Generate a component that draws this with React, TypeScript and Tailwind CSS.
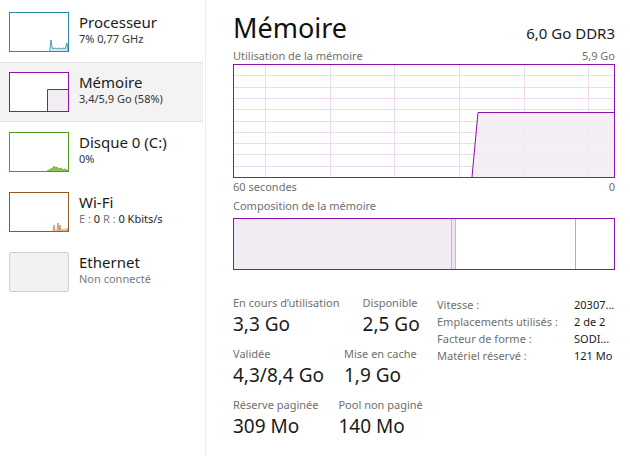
import React from 'react';

const font = { fontFamily: '"Segoe UI", "Noto Sans", "Open Sans", sans-serif' };

interface DeviceProps {
  title: string;
  subtitle: React.ReactNode;
  selected?: boolean;
  thumb: React.ReactNode;
  muted?: boolean;
}

const Device: React.FC<DeviceProps> = ({ title, subtitle, selected, thumb, muted }) => (
  <div
    className={`h-[60px] flex items-start pt-[9px] pl-[9px] border-y ${
      selected ? 'bg-[#f3f3f3] border-[#e2e2e2]' : 'border-transparent'
    }`}
  >
    {thumb}
    <div className="ml-[10px] flex flex-col">
      <span className="text-[15px] leading-[20px] text-[#1b1b1b]">{title}</span>
      <span className={`text-[11px] leading-[14px] ${muted ? 'text-[#7a7a7a]' : 'text-[#333]'}`}>{subtitle}</span>
    </div>
  </div>
);

const Thumb: React.FC<{ color: string; children?: React.ReactNode; bg?: string }> = ({ color, children, bg }) => (
  <svg width="60" height="40" viewBox="0 0 60 40" className="shrink-0">
    <rect x="0.5" y="0.5" width="59" height="39" fill={bg ?? '#fff'} stroke={color} />
    {children}
  </svg>
);

const Stat: React.FC<{ label: string; value: string }> = ({ label, value }) => (
  <div className="flex flex-col">
    <span className="text-[11px] leading-[14px] text-[#6f6f6f] whitespace-nowrap">{label}</span>
    <span className="text-[19px] leading-[28px] text-[#1b1b1b] whitespace-nowrap">{value}</span>
  </div>
);

const App: React.FC = () => {
  const vLines = [32, 97, 161, 226, 291, 355];
  const hLines = Array.from({ length: 9 }, (_, i) => 11.3 * (i + 1));

  return (
    <div className="w-[630px] h-[456px] bg-white flex overflow-hidden" style={font}>
      {/* Sidebar */}
      <div className="w-[206px] shrink-0 pt-[2px] pr-[2px] border-r border-[#ececec]">
        <Device
          title="Processeur"
          subtitle="7% 0,77 GHz"
          thumb={
            <Thumb color="#2a8aa0">
              <polyline
                points="41,39 41,36 42,28 43,35 44,37 46,36 48,37 50,36 52,37 54,36 56,37 57,34 58,31 59,39"
                fill="#d8ebef"
                stroke="#2a8aa0"
                strokeWidth="0.8"
              />
            </Thumb>
          }
        />
        <Device
          title="Mémoire"
          subtitle="3,4/5,9 Go (58%)"
          selected
          thumb={
            <Thumb color="#8b12ae">
              <path d="M38.5 39.5 V17.5 H59.5" fill="none" stroke="#8b12ae" />
              <rect x="39" y="18" width="20" height="21" fill="#f1edf2" />
            </Thumb>
          }
        />
        <Device
          title="Disque 0 (C:)"
          subtitle="0%"
          thumb={
            <Thumb color="#4e9a1c">
              <polyline
                points="38,39 40,38 42,37 44,36 45,34 46,36 48,35 50,37 52,36 54,38 56,37 58,38 59,39"
                fill="#8cc75a"
                stroke="#5aa628"
                strokeWidth="0.8"
              />
            </Thumb>
          }
        />
        <Device
          title="Wi-Fi"
          subtitle={
            <>
              <span className="text-[#7a7a7a]">E : </span>
              <span className="text-[#1b1b1b]">0 </span>
              <span className="text-[#7a7a7a]">R : </span>
              <span className="text-[#1b1b1b]">0 Kbits/s</span>
            </>
          }
          thumb={
            <Thumb color="#8a5a22">
              <polyline
                points="44,39 45,33 46,39 48,39 49,31 50,39 51,33 52,39 58,39 59,36"
                fill="#e9c9a8"
                stroke="#c8865a"
                strokeWidth="0.8"
              />
            </Thumb>
          }
        />
        <Device
          title="Ethernet"
          subtitle="Non connecté"
          muted
          thumb={
            <svg width="60" height="40" viewBox="0 0 60 40" className="shrink-0">
              <rect x="0.5" y="0.5" width="59" height="39" rx="1.5" fill="#f2f2f2" stroke="#cfcfcf" />
            </svg>
          }
        />
      </div>

      {/* Main */}
      <div className="flex-1 pl-[27px] pr-[17px] flex flex-col">
        <div className="flex items-end justify-between mt-[11px] h-[34px]">
          <span className="text-[27px] leading-[34px] text-[#111]">Mémoire</span>
          <span className="text-[15px] leading-[20px] text-[#1b1b1b] mb-[2px]">6,0 Go DDR3</span>
        </div>
        <div className="flex justify-between text-[11px] leading-[14px] text-[#6f6f6f] mt-[4px]">
          <span>Utilisation de la mémoire</span>
          <span>5,9 Go</span>
        </div>
        <svg width="382" height="114" viewBox="0 0 382 114" className="mt-[1px] block">
          <rect x="0.5" y="0.5" width="381" height="113" fill="#fff" />
          {vLines.map((x) => (
            <line key={x} x1={x + 0.5} y1="0" x2={x + 0.5} y2="114" stroke="#eadcee" />
          ))}
          {hLines.map((y) => (
            <line key={y} x1="0" y1={Math.round(y) + 0.5} x2="382" y2={Math.round(y) + 0.5} stroke="#eadcee" />
          ))}
          <polygon points="239,113 245,48.5 381,48.5 381,113" fill="#f1ecf3" fillOpacity="0.85" />
          <polyline points="239,113 245,48.5 381.5,48.5" fill="none" stroke="#8b12ae" />
          <rect x="0.5" y="0.5" width="381" height="113" fill="none" stroke="#8b12ae" />
        </svg>
        <div className="flex justify-between text-[11px] leading-[14px] text-[#6f6f6f] mt-[2px]">
          <span>60 secondes</span>
          <span>0</span>
        </div>
        <div className="text-[11px] leading-[14px] text-[#6f6f6f] mt-[5px]">Composition de la mémoire</div>
        <div className="mt-[5px] h-[52px] w-[382px] border border-[#8b12ae] flex">
          <div className="w-[217px] bg-[#f1ecf3]" />
          <div className="w-[5px] bg-[#efe5f2] border-x border-[#cfb0d8]" />
          <div className="w-[120px] bg-white border-r border-[#b9a6bf]" />
          <div className="flex-1 bg-white" />
        </div>

        {/* Stats */}
        <div className="flex mt-[26px] items-start">
          <div className="w-[204px] flex flex-col gap-[9px]">
            <div className="flex gap-[23px]">
              <Stat label="En cours d’utilisation" value="3,3 Go" />
              <Stat label="Disponible" value="2,5 Go" />
            </div>
            <div className="flex gap-[20px]">
              <Stat label="Validée" value="4,3/8,4 Go" />
              <Stat label="Mise en cache" value="1,9 Go" />
            </div>
            <div className="flex gap-[20px]">
              <Stat label="Réserve paginée" value="309 Mo" />
              <Stat label="Pool non paginé" value="140 Mo" />
            </div>
          </div>
          <div className="grid grid-cols-[137px_1fr] content-start text-[11px] leading-[17px]">
            <span className="text-[#6f6f6f] whitespace-nowrap">Vitesse :</span>
            <span className="text-[#1b1b1b]">20307...</span>
            <span className="text-[#6f6f6f] whitespace-nowrap">Emplacements utilisés :</span>
            <span className="text-[#1b1b1b]">2 de 2</span>
            <span className="text-[#6f6f6f] whitespace-nowrap">Facteur de forme :</span>
            <span className="text-[#1b1b1b]">SODI...</span>
            <span className="text-[#6f6f6f] whitespace-nowrap">Matériel réservé :</span>
            <span className="text-[#1b1b1b]">121 Mo</span>
          </div>
        </div>
      </div>
    </div>
  );
};

export default App;
